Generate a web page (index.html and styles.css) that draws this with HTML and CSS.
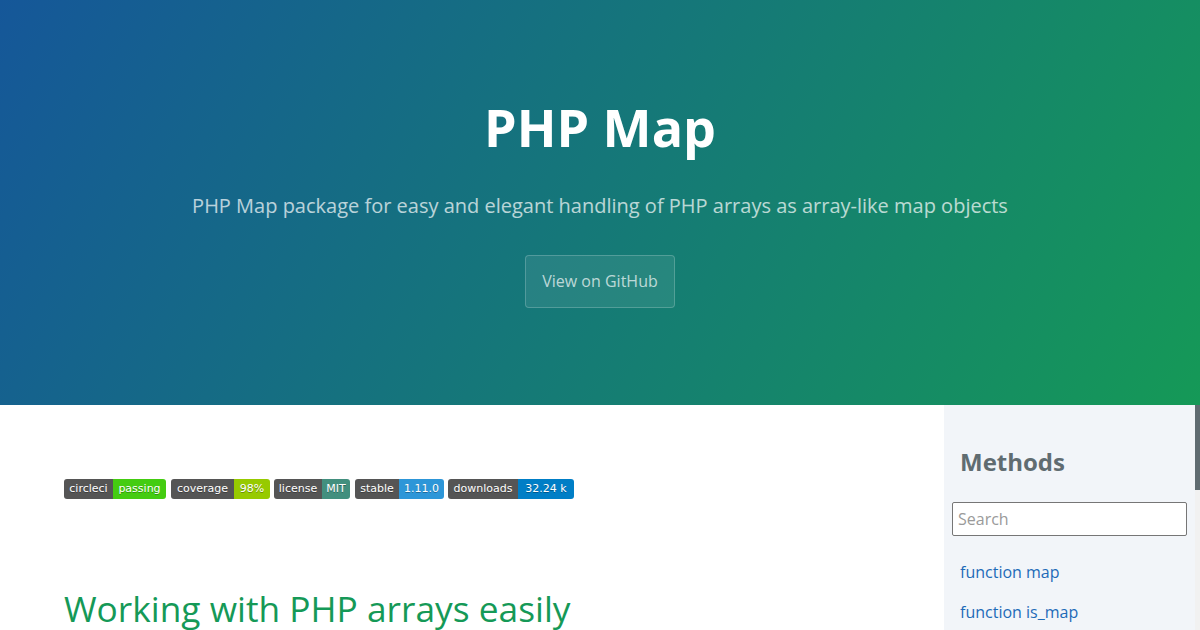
FILE: index.html
```html
<!DOCTYPE html>
<html lang="en">
<head>
<meta charset="utf-8">
<title>PHP Map</title>
<link rel="stylesheet" href="styles.css">
</head>
<body>
<header class="page-header">
  <h1 class="project-name">PHP Map</h1>
  <p class="project-tagline">PHP Map package for easy and elegant handling of PHP arrays as array-like map objects</p>
  <a class="btn" href="#">View on GitHub</a>
</header>
<div class="layout">
  <main class="main-content">
    <p class="badges">
      <span class="badge b1"><span class="b-l">circleci</span><span class="b-r c-pass">passing</span></span>
      <span class="badge b2"><span class="b-l">coverage</span><span class="b-r c-cov">98%</span></span>
      <span class="badge b3"><span class="b-l">license</span><span class="b-r c-lic">MIT</span></span>
      <span class="badge b4"><span class="b-l">stable</span><span class="b-r c-stable">1.11.0</span></span>
      <span class="badge b5"><span class="b-l">downloads</span><span class="b-r c-dl">32.24 k</span></span>
    </p>
    <h2 class="section-title">Working with PHP arrays easily</h2>
  </main>
  <aside class="sidebar">
    <div class="sidebar-inner">
      <h2 class="side-title">Methods</h2>
      <input class="search" type="text" placeholder="Search">
      <nav class="method-list">
        <a href="#">function map</a>
        <a href="#">function is_map</a>
      </nav>
    </div>
    <div class="scrollbar"><div class="thumb"></div></div>
  </aside>
</div>
</body>
</html>
```

FILE: styles.css
```css
html, body {
  margin: 0;
  padding: 0;
}
body {
  font-family: "Open Sans", "Helvetica Neue", Helvetica, Arial, sans-serif;
  font-size: 16px;
  line-height: 1.5;
  color: #606c71;
  background: #fff;
  height: 630px;
  overflow: hidden;
}
.page-header {
  height: 405px;
  box-sizing: border-box;
  padding-top: 92px;
  text-align: center;
  color: #fff;
  background-color: #159957;
  background-image: linear-gradient(120deg, #155799, #159957);
}
.project-name {
  margin: 0;
  font-size: 52px;
  font-weight: 700;
  line-height: 70px;
}
.project-tagline {
  margin: 29px 0 0;
  font-size: 20px;
  font-weight: 400;
  line-height: 30px;
  opacity: 0.7;
}
.btn {
  display: inline-block;
  margin-top: 34px;
  padding: 12px 16px;
  color: rgba(255, 255, 255, 0.7);
  background-color: rgba(255, 255, 255, 0.08);
  border: 1px solid rgba(255, 255, 255, 0.2);
  border-radius: 4px;
  text-decoration: none;
  font-size: 16px;
  line-height: 27px;
}
.layout {
  display: flex;
  height: 225px;
}
.main-content {
  flex: 1;
  padding: 73px 64px 0;
}
.badges {
  margin: 0;
  display: flex;
  height: 20px;
  padding-top: 1px;
}
.badge {
  display: inline-flex;
  height: 20px;
  border-radius: 3px;
  overflow: hidden;
  font-family: "DejaVu Sans", Verdana, sans-serif;
  font-size: 11px;
  line-height: 20px;
  color: #fff;
  text-shadow: 0 1px 0 rgba(1, 1, 1, 0.3);
}
.b1, .b3 { margin-right: 5px; }
.b2, .b4 { margin-right: 4px; }
.b-l, .b-r {
  display: block;
  text-align: center;
  white-space: nowrap;
}
.b-l { background: #555; }
.b1 .b-l { width: 49px; }
.b1 .b-r { width: 53px; }
.b2 .b-l { width: 63px; }
.b2 .b-r { width: 36px; }
.b3 .b-l { width: 48px; }
.b3 .b-r { width: 28px; }
.b4 .b-l { width: 44px; }
.b4 .b-r { width: 45px; }
.b5 .b-l { width: 70px; }
.b5 .b-r { width: 56px; }
.c-pass { background: #4c1; }
.c-cov { background: #97ca00; }
.c-lic { background: #428f7e; }
.c-stable { background: #2d96d8; }
.c-dl { background: #007ec6; }
.section-title {
  margin: 87px 0 0;
  font-size: 35.3px;
  font-weight: 400;
  line-height: 44px;
  color: #159957;
}
.sidebar {
  width: 256px;
  display: flex;
  background: #f2f5f9;
}
.sidebar-inner {
  flex: 1;
  padding: 39px 8px 0;
}
.side-title {
  margin: 0 0 0 8px;
  font-size: 24px;
  font-weight: 700;
  line-height: 36px;
  color: #606c71;
}
.search {
  display: block;
  box-sizing: border-box;
  width: 235px;
  height: 34px;
  margin-top: 22px;
  padding: 0 5px;
  border: 1px solid #767676;
  border-radius: 2px;
  background: #fff;
  font-family: "Open Sans", Arial, sans-serif;
  font-size: 16px;
  color: #333;
}
.search::placeholder {
  color: #9a9a9a;
}
.method-list {
  display: flex;
  flex-direction: column;
  gap: 16px;
  margin-top: 24px;
  padding-left: 8px;
}
.method-list a {
  color: #1e6bb8;
  text-decoration: none;
  font-size: 16px;
  line-height: 24px;
}
.scrollbar {
  width: 5px;
  background: #f1f1f1;
}
.thumb {
  height: 85px;
  background: #606c71;
}
```
